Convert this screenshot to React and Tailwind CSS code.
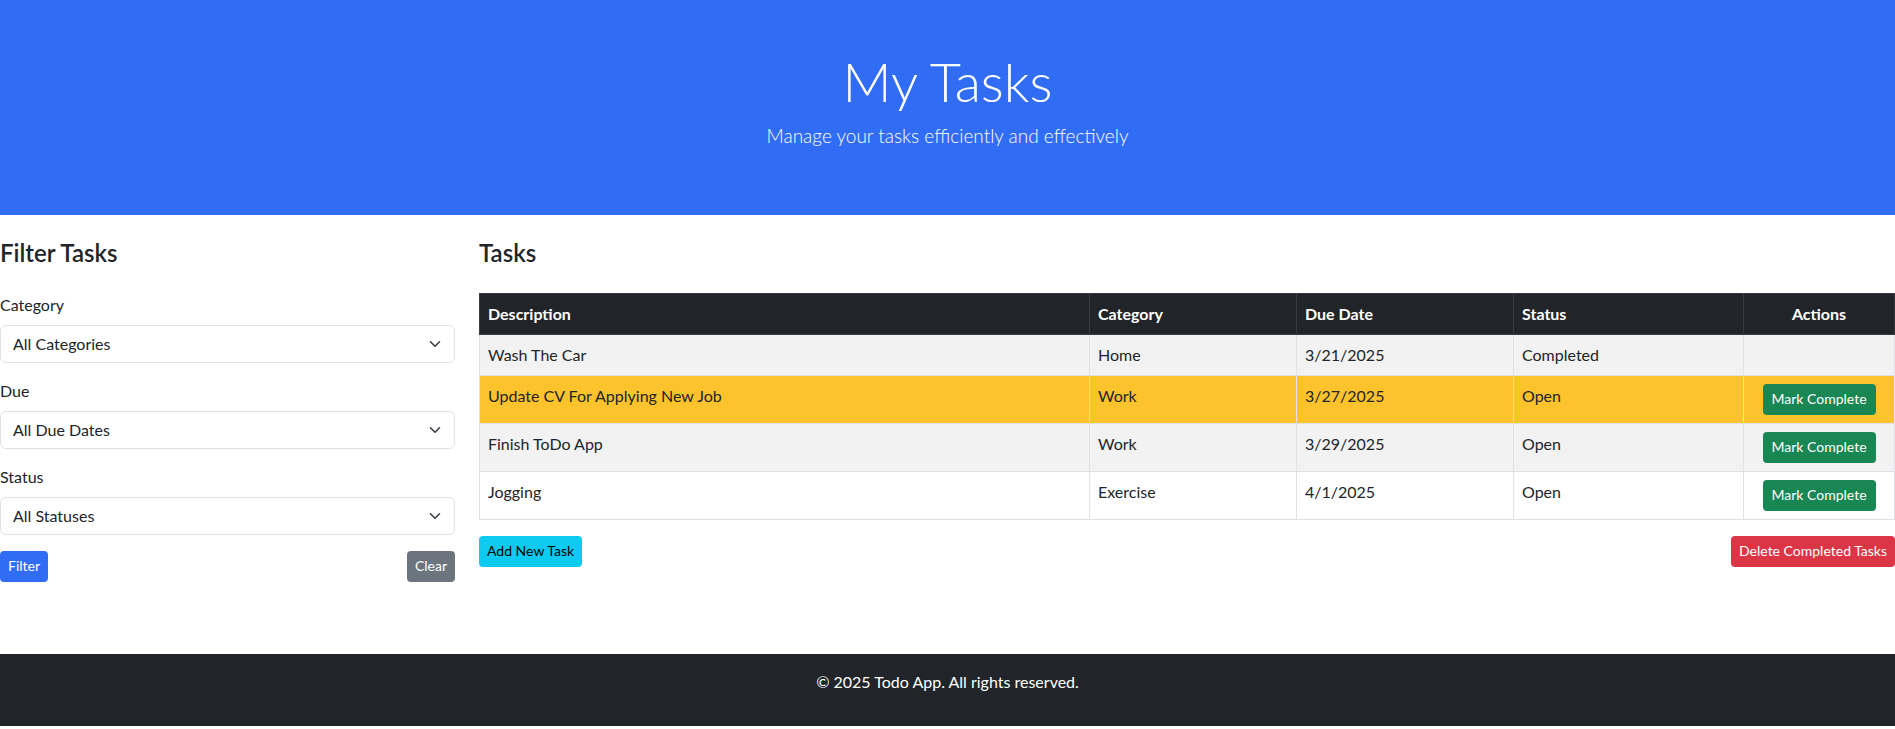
import { useState } from 'react';

const tasks = [
  { id: 1, desc: 'Wash The Car', cat: 'Home', due: '3/21/2025', status: 'Completed' },
  { id: 2, desc: 'Update CV For Applying New Job', cat: 'Work', due: '3/27/2025', status: 'Open', dueSoon: true },
  { id: 3, desc: 'Finish ToDo App', cat: 'Work', due: '3/29/2025', status: 'Open' },
  { id: 4, desc: 'Jogging', cat: 'Exercise', due: '4/1/2025', status: 'Open' },
];

function Chevron() {
  return (
    <svg className="pointer-events-none absolute right-3 top-1/2 -translate-y-1/2" width="16" height="12" viewBox="0 0 16 16" fill="none">
      <path d="m2 5 6 6 6-6" stroke="#343a40" strokeWidth="2" strokeLinecap="round" strokeLinejoin="round" />
    </svg>
  );
}

function FilterSelect({ label, value, options, onChange }) {
  return (
    <div className="mb-4">
      <label className="block mb-2 text-base leading-6">{label}</label>
      <div className="relative">
        <select
          value={value}
          onChange={e => onChange(e.target.value)}
          className="appearance-none w-full h-[38px] pl-3 pr-9 text-base text-[#212529] bg-white border border-[#dee2e6] rounded-md outline-none"
        >
          {options.map(o => <option key={o}>{o}</option>)}
        </select>
        <Chevron />
      </div>
    </div>
  );
}

export default function App() {
  const [category, setCategory] = useState('All Categories');
  const [due, setDue] = useState('All Due Dates');
  const [status, setStatus] = useState('All Statuses');

  const rowBg = (t, i) => {
    if (t.dueSoon) return 'bg-[#fdc32d]';
    return i % 2 === 0 ? 'bg-[#f2f2f2]' : 'bg-white';
  };

  return (
    <div className="bg-white text-[#212529] font-[Lato,sans-serif]">
      <header className="h-[215px] bg-[#316cf4] text-white text-center pt-[50px]">
        <h1 className="text-[54px] leading-[1.2] font-light mb-[6px]">My Tasks</h1>
        <p className="text-[19px] leading-[30px] font-light">Manage your tasks efficiently and effectively</p>
      </header>

      <main className="flex gap-6 pt-6 pb-[72px]">
        <aside className="w-[455px] shrink-0">
          <h4 className="text-2xl leading-[1.2] font-semibold mb-[25px]">Filter Tasks</h4>
          <FilterSelect label="Category" value={category} onChange={setCategory} options={['All Categories', 'Home', 'Work', 'Exercise']} />
          <FilterSelect label="Due" value={due} onChange={setDue} options={['All Due Dates', 'Overdue', 'Due Soon']} />
          <FilterSelect label="Status" value={status} onChange={setStatus} options={['All Statuses', 'Open', 'Completed']} />
          <div className="flex justify-between">
            <button className="h-[31px] px-2 rounded bg-[#316cf4] text-white text-sm">Filter</button>
            <button className="h-[31px] px-2 rounded bg-[#6c757d] text-white text-sm">Clear</button>
          </div>
        </aside>

        <section className="flex-1 min-w-0">
          <h4 className="text-2xl leading-[1.2] font-semibold mb-[25px]">Tasks</h4>
          <table className="w-full table-fixed border-collapse border border-[#dee2e6] mb-4 text-base leading-6">
            <colgroup>
              <col className="w-[610px]" />
              <col className="w-[207px]" />
              <col className="w-[217px]" />
              <col className="w-[230px]" />
              <col />
            </colgroup>
            <thead>
              <tr className="bg-[#212529] text-white">
                <th className="text-left font-bold p-2 border border-[#373b3e]">Description</th>
                <th className="text-left font-bold p-2 border border-[#373b3e]">Category</th>
                <th className="text-left font-bold p-2 border border-[#373b3e]">Due Date</th>
                <th className="text-left font-bold p-2 border border-[#373b3e]">Status</th>
                <th className="text-center font-bold p-2 border border-[#373b3e]">Actions</th>
              </tr>
            </thead>
            <tbody>
              {tasks.map((t, i) => (
                <tr key={t.id} className={rowBg(t, i)}>
                  <td className="p-2 align-top border border-[#dee2e6]">{t.desc}</td>
                  <td className="p-2 align-top border border-[#dee2e6]">{t.cat}</td>
                  <td className="p-2 align-top border border-[#dee2e6]">{t.due}</td>
                  <td className="p-2 align-top border border-[#dee2e6]">{t.status}</td>
                  <td className="p-2 align-top border border-[#dee2e6] text-center">
                    {t.status === 'Open' && (
                      <button className="h-[31px] w-[113px] rounded bg-[#198754] text-white text-sm">Mark Complete</button>
                    )}
                  </td>
                </tr>
              ))}
            </tbody>
          </table>
          <div className="flex justify-between">
            <button className="h-[31px] px-2 rounded bg-[#0dcaf0] text-black text-sm">Add New Task</button>
            <button className="h-[31px] px-2 rounded bg-[#dc3545] text-white text-sm">Delete Completed Tasks</button>
          </div>
        </section>
      </main>

      <footer className="bg-[#212529] text-white text-center pt-4 pb-8">
        <p className="text-base leading-6">&copy; 2025 Todo App. All rights reserved.</p>
      </footer>
    </div>
  );
}
